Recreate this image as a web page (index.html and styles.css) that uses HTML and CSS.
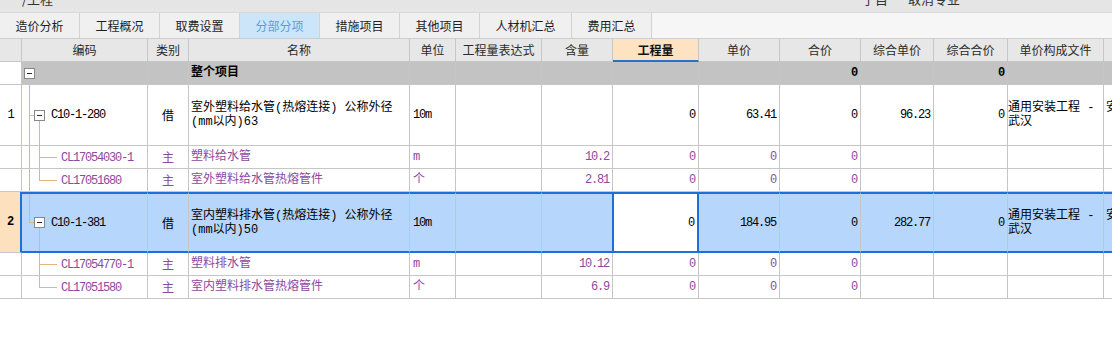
FILE: index.html
```html
<!DOCTYPE html>
<html lang="zh-CN">
<head>
<meta charset="utf-8">
<title>分部分项</title>
<link rel="stylesheet" href="styles.css">
</head>
<body>
<div class="app">
  <div class="titlebar">
    <span class="title-left">/工程</span>
    <span class="title-right"><span class="tr1">子目</span><span class="tr2">取消专业</span></span>
  </div>
  <div class="tabs">
    <div class="tab">造价分析</div>
    <div class="tab">工程概况</div>
    <div class="tab">取费设置</div>
    <div class="tab on">分部分项</div>
    <div class="tab">措施项目</div>
    <div class="tab">其他项目</div>
    <div class="tab wide">人材机汇总</div>
    <div class="tab">费用汇总</div>
  </div>
  <table class="grid">
    <colgroup>
      <col class="c-rn"><col class="c-code"><col class="c-type"><col class="c-name"><col class="c-unit"><col class="c-expr"><col class="c-cont"><col class="c-qty"><col class="c-price"><col class="c-sum"><col class="c-cprice"><col class="c-csum"><col class="c-file"><col class="c-more">
    </colgroup>
    <thead>
      <tr class="hd">
        <th class="rn"></th><th>编码</th><th>类别</th><th>名称</th><th>单位</th><th>工程量表达式</th><th>含量</th><th class="hl">工程量</th><th>单价</th><th>合价</th><th>综合单价</th><th>综合合价</th><th>单价构成文件</th><th></th>
      </tr>
    </thead>
    <tbody>
      <tr class="root">
        <td class="rn blank"></td>
        <td class="code t-root"><div class="node"><span class="tog"></span></div></td>
        <td></td>
        <td class="nm b">整个项目</td>
        <td></td><td></td><td></td><td></td><td></td>
        <td class="num b">0</td>
        <td></td>
        <td class="num b">0</td>
        <td></td><td></td>
      </tr>
      <tr class="item">
        <td class="rn mono">1</td>
        <td class="code t-mid"><div class="node"><span class="tog"></span><span class="mono">C10-1-280</span></div></td>
        <td class="ctr">借</td>
        <td class="nm">室外塑料给水管(热熔连接) 公称外径(mm以内)63</td>
        <td class="mono unit">10m</td>
        <td></td><td></td>
        <td class="num">0</td>
        <td class="num">63.41</td>
        <td class="num">0</td>
        <td class="num">96.23</td>
        <td class="num">0</td>
        <td class="nm file">通用安装工程 - 武汉</td>
        <td class="nm more">安装工程</td>
      </tr>
      <tr class="sub">
        <td class="rn"></td>
        <td class="code t-c1"><span class="mono">CL17054030-1</span></td>
        <td class="ctr">主</td>
        <td class="nm">塑料给水管</td>
        <td class="nm unit">m</td>
        <td></td>
        <td class="num">10.2</td>
        <td class="num">0</td>
        <td class="num">0</td>
        <td class="num">0</td>
        <td></td><td></td><td></td><td></td>
      </tr>
      <tr class="sub">
        <td class="rn"></td>
        <td class="code t-c1-last"><span class="mono">CL17051680</span></td>
        <td class="ctr">主</td>
        <td class="nm">室外塑料给水管热熔管件</td>
        <td class="nm unit">个</td>
        <td></td>
        <td class="num">2.81</td>
        <td class="num">0</td>
        <td class="num">0</td>
        <td class="num">0</td>
        <td></td><td></td><td></td><td></td>
      </tr>
      <tr class="item sel">
        <td class="rn mono">2</td>
        <td class="code t-last"><div class="node"><span class="tog"></span><span class="mono">C10-1-381</span></div></td>
        <td class="ctr">借</td>
        <td class="nm">室内塑料排水管(热熔连接) 公称外径(mm以内)50</td>
        <td class="mono unit">10m</td>
        <td></td>
        <td class="pre-cur"></td>
        <td class="num cur">0</td>
        <td class="num">184.95</td>
        <td class="num">0</td>
        <td class="num">282.77</td>
        <td class="num">0</td>
        <td class="nm file">通用安装工程 - 武汉</td>
        <td class="nm more">安装工程</td>
      </tr>
      <tr class="sub">
        <td class="rn"></td>
        <td class="code t-c2"><span class="mono">CL17054770-1</span></td>
        <td class="ctr">主</td>
        <td class="nm">塑料排水管</td>
        <td class="nm unit">m</td>
        <td></td>
        <td class="num">10.12</td>
        <td class="num">0</td>
        <td class="num">0</td>
        <td class="num">0</td>
        <td></td><td></td><td></td><td></td>
      </tr>
      <tr class="sub">
        <td class="rn"></td>
        <td class="code t-c2-last"><span class="mono">CL17051580</span></td>
        <td class="ctr">主</td>
        <td class="nm">室内塑料排水管热熔管件</td>
        <td class="nm unit">个</td>
        <td></td>
        <td class="num">6.9</td>
        <td class="num">0</td>
        <td class="num">0</td>
        <td class="num">0</td>
        <td></td><td></td><td></td><td></td>
      </tr>
    </tbody>
  </table>
</div>
</body>
</html>
```
FILE: styles.css
```css
html, body {
  margin: 0;
  padding: 0;
  background: #ffffff;
}
body {
  width: 1112px;
  height: 346px;
  overflow: hidden;
  font-family: "Noto Sans CJK SC", "Liberation Sans", sans-serif;
  font-size: 12px;
  color: #000;
}
.app {
  width: 1112px;
  overflow: hidden;
}

/* top (cut-off) title strip */
.titlebar {
  height: 12px;
  background: #e5e5e5;
  overflow: hidden;
  display: flex;
  font-size: 13px;
  line-height: 13px;
  color: #333;
}
.title-left {
  margin: -8px 0 0 22px;
}
.title-right {
  margin: -8px 0 0 auto;
  width: 250px;
  flex: none;
  display: flex;
}
.tr2 { margin-left: 20px; }

/* tab bar */
.tabs {
  display: flex;
  height: 25px;
  border-top: 1px solid #d9d9d9;
  border-bottom: 1px solid #cdcdcd;
  background: #f6f6f6;
}
.tab {
  box-sizing: border-box;
  width: 80px;
  border-right: 1px solid #d3d3d3;
  background: #f0f0f0;
  display: flex;
  align-items: center;
  justify-content: center;
  font-size: 12px;
  color: #1e1e1e;
}
.tab.wide { width: 92px; }
.tab.on {
  background: #cde5f8;
  color: #5b9de0;
}

/* grid */
.grid {
  table-layout: fixed;
  border-collapse: separate;
  border-spacing: 0;
  width: 1184px;
  font-size: 12px;
}
.c-rn { width: 22px; }
.c-code { width: 126px; }
.c-type { width: 41px; }
.c-name { width: 221px; }
.c-unit { width: 46px; }
.c-expr { width: 86px; }
.c-cont { width: 71px; }
.c-qty { width: 86px; }
.c-price { width: 81px; }
.c-sum { width: 81px; }
.c-cprice { width: 73px; }
.c-csum { width: 74px; }
.c-file { width: 96px; }
.c-more { width: 80px; }

.grid th,
.grid td {
  box-sizing: border-box;
  padding: 0;
  border-right: 1px solid #c6c6c6;
  border-bottom: 1px solid #c6c6c6;
  overflow: hidden;
  white-space: normal;
  vertical-align: middle;
  line-height: 14px;
}

.hd { height: 23px; }
.hd th {
  background: #e7e7e7;
  font-weight: normal;
  color: #2a2a2a;
  text-align: center;
  white-space: nowrap;
}
.hd th.hl {
  background: #fde3c2;
  font-weight: bold;
  color: #111;
  border-bottom: 2px solid #2f6fca;
}

.root { height: 23px; }
.item { height: 61px; }
.sub { height: 23px; }

.root td { background: #c3c3c3; }
.root td.rn { background: #ffffff; }

.rn {
  text-align: center;
}
.mono {
  font-family: "Liberation Mono", monospace;
  letter-spacing: -1.2px;
}
.nm {
  font-family: "Liberation Mono", "Noto Sans CJK SC", monospace;
  padding-left: 2px !important;
  text-align: left;
}
.b { font-weight: bold; }
.ctr { text-align: center; }
.num {
  font-family: "Liberation Mono", monospace;
  letter-spacing: -1.2px;
  text-align: right;
  padding-right: 3px !important;
}
.unit { padding-left: 3px !important; }
.file { padding-left: 0 !important; }
.more {
  padding-left: 2px !important;
  padding-bottom: 14px !important;
  white-space: nowrap !important;
}

/* tree column */
.code {
  --tl: #e3b47e;
  background-repeat: no-repeat;
  text-align: left;
}
.node {
  display: flex;
  align-items: center;
  gap: 6px;
}
.tog {
  display: inline-block;
  box-sizing: border-box;
  width: 11px;
  height: 11px;
  flex: none;
  border: 1px solid #878787;
  background: #ffffff linear-gradient(#2b2b2b, #2b2b2b) center / 5px 1px no-repeat;
}
.t-root {
  padding-left: 2px !important;
  background-image: linear-gradient(var(--tl), var(--tl));
  background-position: 7px 100%;
  background-size: 1px 50%;
}
.t-mid,
.t-last {
  padding-left: 12px !important;
}
.t-mid {
  background-image:
    linear-gradient(var(--tl), var(--tl)),
    linear-gradient(var(--tl), var(--tl)),
    linear-gradient(var(--tl), var(--tl));
  background-position: 7px 0, 7px 50%, 17px 100%;
  background-size: 1px 100%, 5px 1px, 1px 50%;
}
.t-last {
  background-image:
    linear-gradient(var(--tl), var(--tl)),
    linear-gradient(var(--tl), var(--tl)),
    linear-gradient(var(--tl), var(--tl));
  background-position: 7px 0, 7px 50%, 17px 100%;
  background-size: 1px 50%, 5px 1px, 1px 50%;
}
.t-c1,
.t-c1-last,
.t-c2,
.t-c2-last {
  padding-left: 39px !important;
}
.t-c1 {
  background-image:
    linear-gradient(var(--tl), var(--tl)),
    linear-gradient(var(--tl), var(--tl)),
    linear-gradient(var(--tl), var(--tl));
  background-position: 7px 0, 17px 0, 17px 50%;
  background-size: 1px 100%, 1px 100%, 18px 1px;
}
.t-c1-last {
  background-image:
    linear-gradient(var(--tl), var(--tl)),
    linear-gradient(var(--tl), var(--tl)),
    linear-gradient(var(--tl), var(--tl));
  background-position: 7px 0, 17px 0, 17px 50%;
  background-size: 1px 100%, 1px 50%, 18px 1px;
}
.t-c2 {
  background-image:
    linear-gradient(var(--tl), var(--tl)),
    linear-gradient(var(--tl), var(--tl));
  background-position: 17px 0, 17px 50%;
  background-size: 1px 100%, 18px 1px;
}
.t-c2-last {
  background-image:
    linear-gradient(var(--tl), var(--tl)),
    linear-gradient(var(--tl), var(--tl));
  background-position: 17px 0, 17px 50%;
  background-size: 1px 50%, 18px 1px;
}

/* child (material) rows */
.sub td {
  color: #8c4a9e;
}

/* selected row */
.sel td {
  background-color: #b7d6fb;
  border-top: 2px solid #1d6fd9;
  border-bottom: 2px solid #1d6fd9;
}
.sel td.rn {
  background-color: #fde1bf;
  font-weight: bold;
  border-top: none;
  border-bottom: 1px solid #c6c6c6;
  border-right: 2px solid #1d6fd9;
}
.sel td.pre-cur {
  border-right-color: #1d6fd9;
}
.sel td.cur {
  background-color: #ffffff;
  border-left: 1px solid #1d6fd9;
  border-right: 2px solid #1d6fd9;
}
```
